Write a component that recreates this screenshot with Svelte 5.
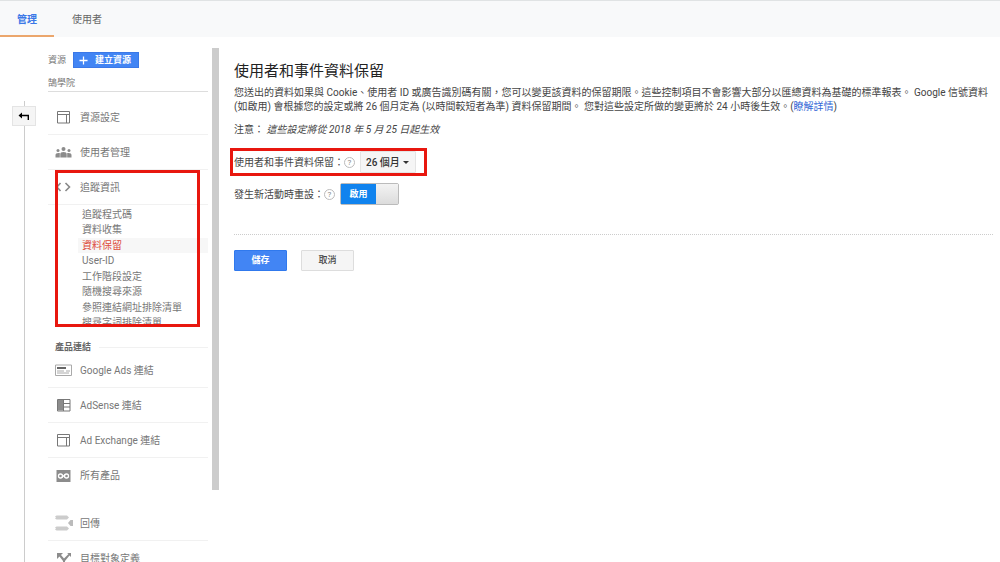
<script lang="ts">
  type Icon = 'panel' | 'people' | 'code' | 'ad' | 'table' | 'loop' | 'return' | 'split'

  const settings: { icon: Icon; label: string }[] = [
    { icon: 'panel', label: '資源設定' },
    { icon: 'people', label: '使用者管理' }
  ]

  const tracking = [
    '追蹤程式碼',
    '資料收集',
    '資料保留',
    'User-ID',
    '工作階段設定',
    '隨機搜尋來源',
    '參照連結網址排除清單',
    '搜尋字詞排除清單'
  ]

  const products: { icon: Icon; label: string }[] = [
    { icon: 'ad', label: 'Google Ads 連結' },
    { icon: 'table', label: 'AdSense 連結' },
    { icon: 'panel', label: 'Ad Exchange 連結' },
    { icon: 'loop', label: '所有產品' }
  ]

  const more: { icon: Icon; label: string }[] = [
    { icon: 'return', label: '回傳' },
    { icon: 'split', label: '目標對象定義' }
  ]

  let current = $state('資料保留')
  let retention = $state('26')
  let resetOnActivity = $state(true)
</script>

{#snippet icon(name: Icon)}
  <svg class="icon" viewBox="0 0 18 16" aria-hidden="true">
    {#if name === 'panel'}
      <path d="M2.500 2.500h12v11.500h-12zM2.500 5.500h12M11.500 6v8" fill="none" stroke="#777" />
    {:else if name === 'people'}
      <circle cx="3" cy="6.500" r="1.500" />
      <circle cx="8.500" cy="5" r="2" />
      <circle cx="14" cy="6.500" r="1.500" />
      <path d="M0.500 13.500v-2.500q0-2 3-2h1.300v4.500zM5.300 13.500V10q0-2 3.200-2t3.200 2v3.500zM12.200 13.500V9h1.300q3 0 3 2v2.500z" />
    {:else if name === 'code'}
      <path d="M5.500 4 2 8l3.500 4M10.500 4 14.500 8l-4 4" fill="none" stroke="#888" stroke-width="1.600" />
    {:else if name === 'ad'}
      <path d="M0.500 3h16v10.500h-16z" fill="#fff" stroke="#aaa" />
      <path d="M2 5h9v2H2z" fill="#666" />
      <path d="M2 9h7M2 11h12M11 9h4" stroke="#aaa" />
    {:else if name === 'table'}
      <path d="M2.500 2.500h12.500v11.500H2.500z" fill="#fff" stroke="#777" />
      <path d="M3 3h5.500v10.500H3z" />
      <path d="M8.500 3v11M9 6.500h6M9 10h6" stroke="#777" />
    {:else if name === 'loop'}
      <path d="M1.500 2h14v12h-14z" />
      <circle cx="5.500" cy="8" r="2" fill="none" stroke="#fff" stroke-width="1.300" />
      <circle cx="11.500" cy="8" r="2" fill="none" stroke="#fff" stroke-width="1.300" />
      <path d="m7 9.300 3-2.600" stroke="#fff" stroke-width="1.300" />
    {:else if name === 'return'}
      <path d="M0 1.500 1.500 0.500H12l2 2-2 2H1.500L0 3.500l1-1zM0 12.500l1.500-1H12l2 2-2 2H1.500L0 14.500l1-1z" fill="#ccc" />
      <path d="m13 8 2.500-3H18v6h-2.500z" fill="#bbb" />
    {:else}
      <path d="M2 3h6L6 5l3 3.500L13.500 4 12 3h4v4l-1.500-1.500L10 11v5H8v-5L4.500 6.500 2 9z" />
    {/if}
  </svg>
{/snippet}

{#snippet row(name: Icon, label: string)}
  <a class="row" href="#settings">
    {@render icon(name)}
    <span>{label}</span>
  </a>
{/snippet}

<div class="admin">
  <nav class="tabs" aria-label="管理">
    <a class="tab active" href="#admin" aria-current="page">管理</a>
    <a class="tab" href="#users">使用者</a>
  </nav>

  <div class="body">
    <div class="rail">
      <button type="button" class="back" aria-label="返回">
        <svg viewBox="0 0 12 10" aria-hidden="true">
          <path d="M0.500 4.500 4 1.500v2.200h7V9H9.600V5.300H4v2.200z" />
        </svg>
      </button>
    </div>

    <aside class="sidebar">
      <div class="property">
        <span>資源</span>
        <button type="button" class="create">
          <svg viewBox="0 0 10 10" aria-hidden="true">
            <path d="M5 0.500v9M0.500 5h9" stroke="#fff" stroke-width="1.400" />
          </svg>
          建立資源
        </button>
      </div>
      <div class="property-name">鵠學院</div>

      <nav class="menu" aria-label="資源">
        {#each settings as item}
          {@render row(item.icon, item.label)}
        {/each}

        <div class="tracking">
          {@render row('code', '追蹤資訊')}
          <div class="sub-clip">
            <ul class="sub">
              {#each tracking as label}
                <li class:current={label === current}>
                  <a href="#tracking" onclick={() => (current = label)}>{label}</a>
                </li>
              {/each}
            </ul>
          </div>
        </div>

        <h2 class="group">產品連結</h2>
        {#each products as item}
          {@render row(item.icon, item.label)}
        {/each}

        <div class="more">
          {#each more as item}
            {@render row(item.icon, item.label)}
          {/each}
        </div>
      </nav>
    </aside>

    <div class="scrollbar"></div>

    <main>
      <h1>使用者和事件資料保留</h1>
      <p class="intro">
        您送出的資料如果與 Cookie、使用者 ID 或廣告識別碼有關，您可以變更該資料的保留期限。這些控制項目不會影響大部分以匯總資料為基礎的標準報表。 Google 信號資料 (如啟用) 會根據您的設定或將 26 個月定為 (以時間較短者為準) 資料保留期間。 您對這些設定所做的變更將於 24 小時後生效。(<a href="#details">瞭解詳情</a>)
      </p>
      <p class="note">注意： <em>這些設定將從 2018 年 5 月 25 日起生效</em></p>

      <div class="field marked">
        <label for="retention">使用者和事件資料保留：</label>
        <button type="button" class="help" aria-label="說明">?</button>
        <div class="select">
          <select id="retention" bind:value={retention}>
            <option value="14">14 個月</option>
            <option value="26">26 個月</option>
            <option value="38">38 個月</option>
          </select>
        </div>
      </div>

      <div class="field">
        <label for="reset">發生新活動時重設：</label>
        <button type="button" class="help" aria-label="說明">?</button>
        <label class="toggle" class:on={resetOnActivity}>
          <input id="reset" type="checkbox" bind:checked={resetOnActivity} />
          <span class="state">{resetOnActivity ? '啟用' : '停用'}</span>
          <span class="knob"></span>
        </label>
      </div>

      <div class="actions">
        <button type="button" class="primary">儲存</button>
        <button type="button">取消</button>
      </div>
    </main>
  </div>
</div>

<style>
  :global(body) {
    margin: 0;
    background: #fff;
  }

  .admin {
    height: 100vh;
    overflow: hidden;
    display: flex;
    flex-direction: column;
    box-sizing: border-box;
    border-top: 1px solid #e0e3e4;
    color: #444;
    font-family: Roboto, 'Noto Sans CJK TC', sans-serif;
    font-size: 10px;
    line-height: 15px;
  }

  a {
    color: inherit;
    text-decoration: none;
  }

  button,
  select {
    box-sizing: border-box;
    margin: 0;
    font: inherit;
    cursor: pointer;
  }

  .tabs {
    flex: none;
    display: flex;
    height: 36px;
    background: #f8f9fa;
  }

  .tab {
    box-sizing: border-box;
    padding: 11px 18px 0;
    color: #666;
  }

  .tab.active {
    padding: 11px 17px 0;
    border-bottom: 2px solid #eba66c;
    color: #3b78e7;
    font-weight: 700;
  }

  .body {
    flex: 1;
    min-height: 0;
    display: flex;
    align-items: flex-start;
  }

  .rail {
    flex: none;
    align-self: stretch;
    width: 48px;
    margin-top: 64px;
    background: linear-gradient(#ccc, #ccc) 24px 0 / 1px 100% no-repeat;
  }

  .back {
    display: grid;
    place-items: center;
    width: 24px;
    height: 20px;
    margin: 5px 0 0 12px;
    padding: 0;
    border: 1px solid #e4e4e4;
    background: #f5f5f5;
  }

  .back svg {
    width: 12px;
    height: 10px;
  }

  .sidebar {
    flex: none;
    width: 160px;
    color: #777;
  }

  .property {
    display: flex;
    align-items: center;
    gap: 7px;
    padding-top: 15px;
  }

  .property > span {
    font-size: 9px;
  }

  .create {
    display: flex;
    align-items: center;
    gap: 7px;
    height: 16px;
    padding: 0 7px 0 5px;
    border: 1px solid #3b78e7;
    background: #4285f4;
    color: #fff;
    font-size: 9px;
    font-weight: 700;
    line-height: 14px;
  }

  .create svg {
    width: 9px;
    height: 9px;
  }

  .property-name {
    padding-top: 7px;
    border-bottom: 1px solid #ddd;
    font-size: 9px;
    line-height: 16px;
  }

  .menu {
    padding-top: 8px;
  }

  .row {
    display: flex;
    align-items: center;
    gap: 7px;
    box-sizing: border-box;
    height: 35px;
    padding-left: 7px;
    border-bottom: 1px solid #f1f1f1;
  }

  .icon {
    flex: none;
    width: 18px;
    height: 16px;
    fill: #8c8c8c;
  }

  .tracking {
    position: relative;
  }

  .tracking::after {
    content: '';
    position: absolute;
    inset: 0 8px 0 7px;
    border: 3px solid #e8170f;
    pointer-events: none;
  }

  .sub-clip {
    height: 120px;
    padding-top: 2px;
    overflow: hidden;
  }

  .sub {
    display: flex;
    flex-direction: column;
    justify-content: space-between;
    height: 123px;
    margin: 0;
    padding: 0 0 0 30px;
    list-style: none;
  }

  .sub li {
    padding-left: 4px;
  }

  .sub a {
    display: block;
  }

  .sub .current {
    background: #f7f7f7;
    color: #dd4b39;
  }

  .group {
    display: flex;
    align-items: center;
    gap: 8px;
    margin: 13px 0 -2px;
    padding-left: 7px;
    color: #666;
    font-size: 9px;
    font-weight: 700;
    line-height: 15px;
  }

  .group::after {
    content: '';
    flex: 1;
    border-top: 1px solid #f1f1f1;
  }

  .more {
    padding-top: 13px;
  }

  .menu > .row:has(+ .more) {
    border-bottom: 0;
  }

  .scrollbar {
    flex: none;
    width: 7px;
    height: 442px;
    margin: 11px 15px 0 4px;
    background: #ccc;
  }

  main {
    flex: 1;
    min-width: 0;
    padding: 23px 7px 0 0;
  }

  h1 {
    margin: 0;
    color: #222;
    font-size: 15px;
    font-weight: 400;
    line-height: 22px;
  }

  .intro {
    margin: 4px 0 0;
    line-height: 14px;
  }

  .intro a {
    color: #3367d6;
  }

  .note {
    margin: 8px 0 0;
  }

  .field {
    position: relative;
    display: flex;
    align-items: center;
    height: 22px;
    margin-top: 10px;
    width: max-content;
  }

  .field.marked {
    margin-top: 14px;
  }

  .marked::after {
    content: '';
    position: absolute;
    inset: -3px -11px -3px -4px;
    border: 3px solid #e8170f;
    pointer-events: none;
  }

  .help {
    width: 11px;
    height: 11px;
    padding: 0;
    border: 1px solid #bbb;
    border-radius: 50%;
    background: #fff;
    color: #888;
    font-size: 8px;
    line-height: 9px;
  }

  .select {
    position: relative;
    margin-left: 5px;
  }

  .select::after {
    content: '';
    position: absolute;
    top: 10px;
    right: 7px;
    border: 3px solid transparent;
    border-top-color: #333;
    border-bottom: 0;
    pointer-events: none;
  }

  select {
    width: 56px;
    height: 22px;
    padding: 0 0 0 5px;
    appearance: none;
    border: 1px solid #e4e4e4;
    border-radius: 1px;
    background: #f5f5f5;
    color: #333;
    font-weight: 500;
  }

  .toggle {
    position: relative;
    display: flex;
    width: 57px;
    height: 20px;
    margin-left: 5px;
    border: 1px solid #bbb;
    border-radius: 2px;
    background: #eee;
    cursor: pointer;
  }

  .toggle input {
    position: absolute;
    inset: 0;
    margin: 0;
    opacity: 0;
  }

  .state {
    flex: 1;
    font-size: 9px;
    font-weight: 700;
    line-height: 20px;
    text-align: center;
  }

  .on .state {
    background: #1083ee;
    color: #fff;
  }

  .knob {
    width: 22px;
    background: linear-gradient(#f3f3f3, #dcdcdc);
  }

  .toggle:not(.on) .knob {
    order: -1;
  }

  .actions {
    display: flex;
    gap: 14px;
    margin-top: 29px;
    padding-top: 15px;
    border-top: 1px dotted #ccc;
  }

  .actions button {
    width: 53px;
    height: 21px;
    padding: 0;
    border: 1px solid #ddd;
    border-radius: 1px;
    background: #f5f5f5;
    color: #444;
    font-size: 9px;
    font-weight: 500;
  }

  .actions .primary {
    border-color: #3079ed;
    background: #4285f4;
    color: #fff;
    font-weight: 700;
  }

  button:focus-visible,
  select:focus-visible {
    outline: 2px solid #4285f4;
    outline-offset: 1px;
  }
</style>
